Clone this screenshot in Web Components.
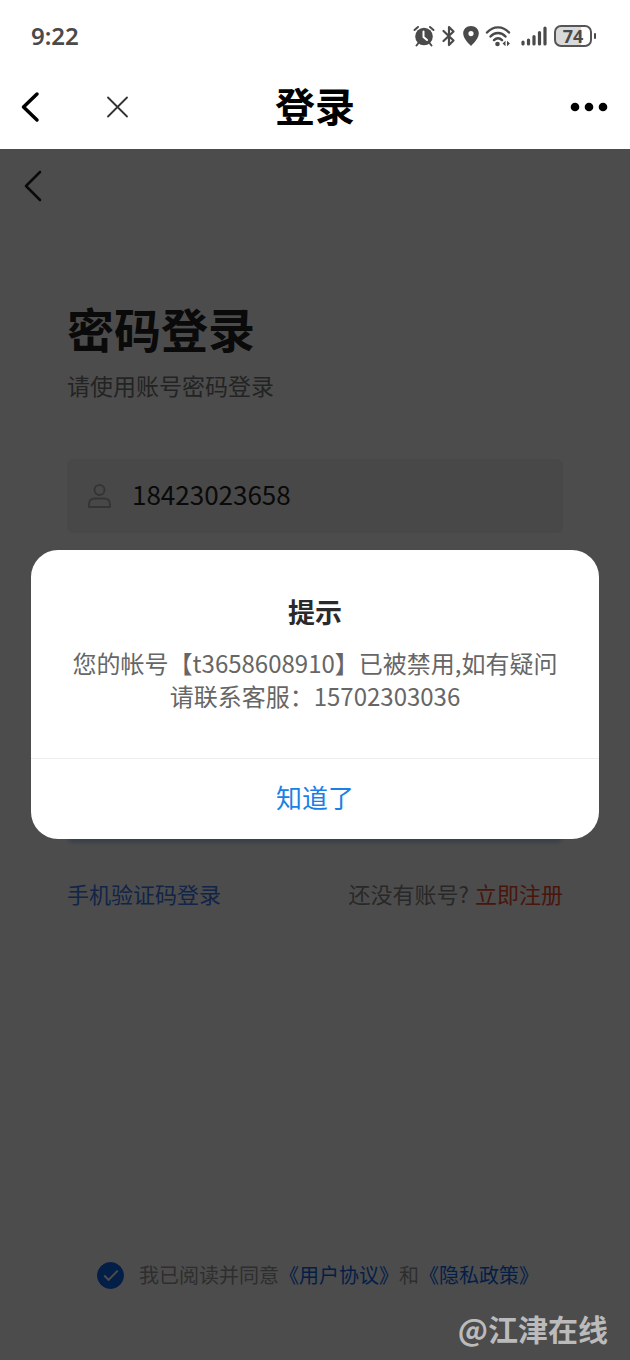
<!DOCTYPE html>
<html lang="zh-CN">
<head>
<meta charset="UTF-8">
<meta name="viewport" content="width=device-width, initial-scale=1">
<title>登录</title>
<style>
  body {
    margin: 0;
    font-family: "Noto Sans CJK SC", sans-serif;
    background: #fff;
  }
</style>
</head>
<body>
<login-app></login-app>

<script>
class StatusBar extends HTMLElement {
  constructor() {
    super();
    this.attachShadow({ mode: "open" });
  }

  connectedCallback() {
    this.shadowRoot.innerHTML = `
      <style>
        :host {
          display: flex;
          align-items: center;
          justify-content: space-between;
          height: 72px;
          box-sizing: border-box;
          padding: 0 34px 0 31px;
          color: #4a4a4a;
        }
        .time {
          font: 600 24px/32px "Noto Sans", sans-serif;
        }
        .icons {
          display: flex;
          align-items: center;
        }
        svg {
          display: block;
        }
        .wifi {
          margin-left: 6px;
        }
        .signal {
          margin-left: 10px;
        }
        .battery {
          display: flex;
          align-items: center;
          margin-left: 7px;
        }
        .level {
          box-sizing: border-box;
          width: 38px;
          height: 22px;
          border: 2px solid #555;
          border-radius: 7px;
          background: linear-gradient(90deg, #d9d9d9 74%, #fff 74%);
          font: 700 18px/18px "Noto Sans", sans-serif;
          text-align: center;
        }
        .tip {
          width: 2px;
          height: 6px;
          margin-left: 2px;
          border-radius: 1px;
          background: #4a4a4a;
        }
      </style>
      <span class="time">9:22</span>
      <div class="icons">
        <svg width="22" height="22" viewBox="0 0 22 22" fill="none" stroke="currentColor" stroke-width="2" stroke-linecap="round">
          <circle cx="11" cy="11.500" r="8.800" fill="currentColor" stroke="none"/>
          <path d="M1.500 5 5 2M20.500 5 17 2M5.500 18 3.500 20.500M16.500 18 18.500 20.500"/>
          <path d="M10.500 6.500V12L14 15" stroke="#fff"/>
        </svg>
        <svg width="28" height="22" viewBox="0 0 28 22" fill="none" stroke="currentColor" stroke-width="2.200" stroke-linejoin="round" stroke-linecap="round">
          <path d="M8.500 6 18.500 15.500 14 20V2L18.500 6.500 8.500 16"/>
        </svg>
        <svg width="16" height="22" viewBox="0 0 16 22">
          <path fill="currentColor" fill-rule="evenodd" d="M8 1C3.500 1 .2 4.200.2 8.300.2 13 4.500 17.500 8 21c3.500-3.500 7.800-8 7.800-12.700C15.800 4.200 12.500 1 8 1Zm0 5a2.600 2.600 0 1 1 0 5.200A2.600 2.600 0 0 1 8 6Z"/>
        </svg>
        <svg class="wifi" width="26" height="22" viewBox="0 0 26 22" fill="none" stroke="currentColor" stroke-width="2.400" stroke-linecap="round">
          <path d="M2 7.500C8 .6 18 .6 24 7.500M5.500 11.500c4-4.600 11-4.600 15 0M9 15.200c2.500-2.600 5.500-2.600 8 0"/>
          <circle cx="12.500" cy="19" r="2.300" fill="currentColor" stroke="none"/>
          <path d="m17.500 18.500 3-2.700v5.400ZM25 18.500l-3-2.700v5.400Z" fill="currentColor" stroke="none"/>
        </svg>
        <svg class="signal" width="26" height="22" viewBox="0 0 26 22" stroke="currentColor" stroke-width="3.200" stroke-linecap="round">
          <path d="M2 17v2M7.500 15v4M13 11.500V19M18.500 7.500V19M24 3v16"/>
        </svg>
        <div class="battery">
          <div class="level">74</div>
          <div class="tip"></div>
        </div>
      </div>
    `;
  }
}

class NavBar extends HTMLElement {
  constructor() {
    super();
    this.attachShadow({ mode: "open" });
  }

  connectedCallback() {
    this.shadowRoot.innerHTML = `
      <style>
        :host {
          display: grid;
          grid-template-columns: 1fr auto 1fr;
          align-items: center;
          height: 77px;
          box-sizing: border-box;
          padding: 0 20px 8px;
          color: #000;
        }
        h1 {
          margin: 0;
          padding-bottom: 4px;
          font-size: 40px;
          line-height: 56px;
          font-weight: 700;
        }
        .left {
          display: flex;
          align-items: center;
          gap: 64px;
        }
        .right {
          display: flex;
          justify-content: flex-end;
        }
        button {
          padding: 0;
          border: none;
          background: none;
          color: inherit;
        }
        svg {
          display: block;
        }
      </style>
      <div class="left">
        <button aria-label="返回">
          <svg width="22" height="32" viewBox="0 0 22 32" fill="none" stroke="currentColor" stroke-width="3.500" stroke-linecap="round" stroke-linejoin="round">
            <path d="M17 3 3.500 16 17 29"/>
          </svg>
        </button>
        <button aria-label="关闭">
          <svg width="24" height="24" viewBox="0 0 24 24" fill="none" stroke="#333" stroke-width="1.800" stroke-linecap="round">
            <path d="m2 2.500 19 19M21 2.500l-19 19"/>
          </svg>
        </button>
      </div>
      <h1><slot></slot></h1>
      <div class="right">
        <button aria-label="更多">
          <svg width="40" height="12" viewBox="0 0 40 12" fill="currentColor">
            <circle cx="5" cy="6" r="4.300"/><circle cx="19" cy="6" r="4.300"/><circle cx="33" cy="6" r="4.300"/>
          </svg>
        </button>
      </div>
    `;
  }
}

class LoginForm extends HTMLElement {
  constructor() {
    super();
    this.attachShadow({ mode: "open" });
  }

  connectedCallback() {
    this.shadowRoot.innerHTML = `
      <style>
        :host {
          display: block;
          padding: 0 67px;
        }
        h2 {
          margin: 0;
          font-size: 47px;
          line-height: 64px;
          font-weight: 700;
          color: #222;
        }
        p {
          margin: 9px 0 0;
          font-size: 23px;
          line-height: 32px;
          color: #777;
        }
        form {
          display: flex;
          flex-direction: column;
          margin-top: 58px;
        }
        .field {
          display: flex;
          align-items: center;
          gap: 20px;
          height: 74px;
          box-sizing: border-box;
          padding: 0 20px;
          border-radius: 6px;
          background: #f0f0f0;
          color: #b0b0b0;
        }
        .field + .field {
          margin-top: 30px;
        }
        .field input {
          flex: 1;
          min-width: 0;
          padding: 0 0 4px;
          border: none;
          outline: none;
          background: none;
          font: 26px/36px "Noto Sans CJK SC", sans-serif;
          color: #222;
        }
        .submit {
          height: 76px;
          margin-top: 126px;
          border: none;
          border-radius: 6px;
          background: #1677ff;
          box-shadow: 0 4px 4px #c0d8f4;
        }
        .links {
          display: flex;
          justify-content: space-between;
          margin-top: 38px;
          font-size: 22px;
          line-height: 32px;
          color: #888;
        }
        a {
          text-decoration: none;
          color: #3c78f0;
        }
        .register {
          margin-left: 6px;
          color: #f04a2a;
        }
      </style>
      <h2>密码登录</h2>
      <p>请使用账号密码登录</p>
      <form>
        <label class="field">
          <svg width="25" height="26" viewBox="0 0 25 26" fill="none" stroke="currentColor" stroke-width="2" stroke-linejoin="round">
            <circle cx="12.500" cy="7" r="5"/>
            <path d="M2 24v-2.500c0-4 2.500-6 6-6h9c3.500 0 6 2 6 6V24Z"/>
          </svg>
          <input type="tel" value="18423023658" aria-label="账号">
        </label>
        <label class="field">
          <input type="password" aria-label="密码">
        </label>
        <button class="submit" type="button" aria-label="登录"></button>
      </form>
      <div class="links">
        <a href="#">手机验证码登录</a>
        <span>还没有账号?<a class="register" href="#">立即注册</a></span>
      </div>
    `;
  }
}

class AgreementCheck extends HTMLElement {
  constructor() {
    super();
    this.attachShadow({ mode: "open" });
  }

  connectedCallback() {
    this.shadowRoot.innerHTML = `
      <style>
        :host {
          display: flex;
          align-items: center;
          justify-content: center;
          gap: 15px;
          padding-left: 6px;
          font-size: 20px;
          line-height: 30px;
          color: #999;
        }
        .check {
          display: grid;
        }
        input, svg {
          grid-area: 1 / 1;
        }
        input {
          appearance: none;
          width: 27px;
          height: 27px;
          margin: 0;
          border: 1px solid #999;
          border-radius: 50%;
        }
        input:checked {
          border-color: #0a68f0;
          background: #0a68f0;
        }
        svg {
          pointer-events: none;
        }
        input:not(:checked) + svg {
          display: none;
        }
        a {
          text-decoration: none;
          color: #0a68f0;
        }
      </style>
      <span class="check">
        <input type="checkbox" id="agree" checked>
        <svg width="27" height="27" viewBox="0 0 28 28" fill="none" stroke="#fff" stroke-width="2">
          <path d="m7.500 14 4.500 4.500L21.500 9"/>
        </svg>
      </span>
      <span><label for="agree">我已阅读并同意</label><a href="#">《用户协议》</a>和<a href="#">《隐私政策》</a></span>
    `;
  }
}

class TipDialog extends HTMLElement {
  constructor() {
    super();
    this.attachShadow({ mode: "open" });
  }

  connectedCallback() {
    this.shadowRoot.innerHTML = `
      <style>
        :host {
          position: absolute;
          inset: 0;
          display: grid;
          align-items: center;
          padding: 0 31px 120px;
          background: rgba(0, 0, 0, 0.7);
        }
        :host([hidden]) {
          display: none;
        }
        .dialog {
          border-radius: 27px;
          background: #fff;
          text-align: center;
          overflow: hidden;
        }
        h3 {
          margin: 0;
          padding-top: 42px;
          font-size: 27px;
          line-height: 40px;
          font-weight: 700;
          color: #2a2a2a;
        }
        .message {
          padding: 14px 40px 46px;
          font-size: 24px;
          line-height: 33px;
          color: #666;
        }
        button {
          display: block;
          width: 100%;
          height: 81px;
          padding: 0 0 4px;
          border: none;
          border-top: 1px solid #eee;
          background: none;
          font: 26px/36px "Noto Sans CJK SC", sans-serif;
          color: #1a80e6;
        }
      </style>
      <div class="dialog" role="alertdialog" aria-labelledby="title">
        <h3 id="title">${this.getAttribute("heading")}</h3>
        <div class="message"><slot></slot></div>
        <button type="button">${this.getAttribute("confirm")}</button>
      </div>
    `;
    this.shadowRoot.querySelector("button").addEventListener("click", () => {
      this.hidden = true;
    });
  }
}

class LoginApp extends HTMLElement {
  constructor() {
    super();
    this.attachShadow({ mode: "open" });
  }

  connectedCallback() {
    this.shadowRoot.innerHTML = `
      <style>
        :host {
          display: flex;
          flex-direction: column;
          min-height: 100vh;
        }
        main {
          position: relative;
          flex: 1;
          display: flex;
          flex-direction: column;
        }
        .back {
          align-self: flex-start;
          margin: 20px 0 0 22px;
          padding: 0;
          border: none;
          background: none;
        }
        .back svg {
          display: block;
        }
        login-form {
          margin-top: 93px;
        }
        agreement-check {
          margin-top: auto;
          padding-bottom: 70px;
        }
        .watermark {
          position: absolute;
          right: 22px;
          bottom: 10px;
          font-size: 30px;
          line-height: 44px;
          font-weight: 700;
          color: #bbb;
        }
      </style>
      <status-bar></status-bar>
      <nav-bar>登录</nav-bar>
      <main>
        <button class="back" aria-label="返回">
          <svg width="22" height="34" viewBox="0 0 22 34" fill="none" stroke="#222" stroke-width="2.600" stroke-linecap="round" stroke-linejoin="round">
            <path d="M18 3 4 17l14 14"/>
          </svg>
        </button>
        <login-form></login-form>
        <agreement-check></agreement-check>
        <tip-dialog heading="提示" confirm="知道了">您的帐号【t3658608910】已被禁用,如有疑问请联系客服：15702303036</tip-dialog>
        <div class="watermark">@江津在线</div>
      </main>
    `;
  }
}

customElements.define("status-bar", StatusBar);
customElements.define("nav-bar", NavBar);
customElements.define("login-form", LoginForm);
customElements.define("agreement-check", AgreementCheck);
customElements.define("tip-dialog", TipDialog);
customElements.define("login-app", LoginApp);
</script>
</body>
</html>
